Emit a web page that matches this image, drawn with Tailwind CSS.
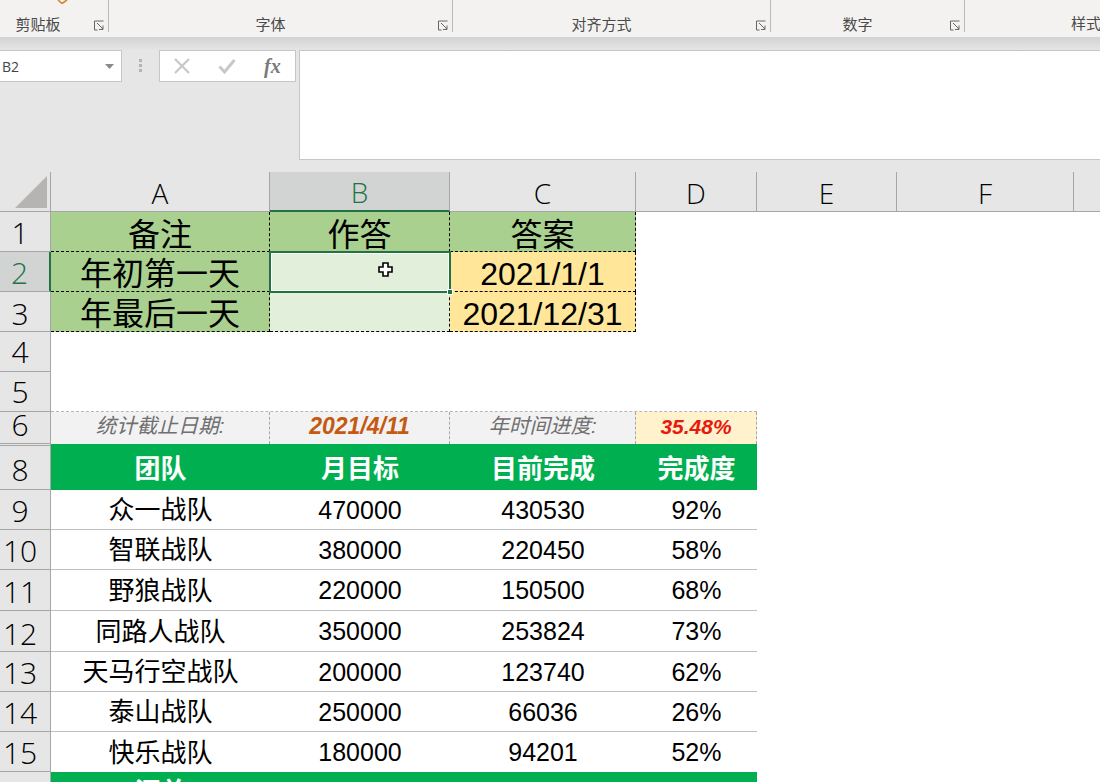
<!DOCTYPE html>
<html lang="zh-CN">
<head>
    <meta charset="UTF-8">
    <meta name="viewport" content="width=device-width, initial-scale=1.0">
    <title>Excel</title>
    <script src="https://cdn.jsdelivr.net/npm/@tailwindcss/browser@4"></script>
</head>
<body class="bg-white">
<div class="relative w-[1100px] h-[782px] overflow-hidden bg-white text-black font-['Liberation_Sans','Noto_Sans_CJK_SC',sans-serif]">

    <!-- Ribbon -->
    <div class="relative flex h-[37px] bg-[#f3f2f1] text-[15px] leading-[18px] text-[#4a4a4a] font-['Noto_Sans_CJK_SC',sans-serif]">
        <svg class="absolute left-[57px] top-0" width="12" height="4" viewBox="0 0 12 4"><path d="M1 0l4 3.5 5-3.5" fill="none" stroke="#d9822b" stroke-width="1.6"/></svg>
        <div class="h-[32px] w-[109px] shrink-0 flex items-end border-r border-[#b9b9b9]">
            <span class="flex-1 text-center pr-[18px] -mb-[1px]">剪贴板</span>
            <svg class="mr-[4px] mb-[1px]" width="10" height="11" viewBox="0 0 10 11"><path d="M9.5 1H.5v9h3M3 3l6 6M9 5.5V9.500H5" fill="none" stroke="#666" stroke-width="1"/></svg>
        </div>
        <div class="h-[32px] w-[344px] shrink-0 flex items-end border-r border-[#b9b9b9]">
            <span class="flex-1 text-center pr-[6px] -mb-[1px]">字体</span>
            <svg class="mr-[4px] mb-[1px]" width="10" height="11" viewBox="0 0 10 11"><path d="M9.5 1H.5v9h3M3 3l6 6M9 5.5V9.500H5" fill="none" stroke="#666" stroke-width="1"/></svg>
        </div>
        <div class="h-[32px] w-[318px] shrink-0 flex items-end border-r border-[#b9b9b9]">
            <span class="flex-1 text-center pr-[6px] -mb-[1px]">对齐方式</span>
            <svg class="mr-[4px] mb-[1px]" width="10" height="11" viewBox="0 0 10 11"><path d="M9.5 1H.5v9h3M3 3l6 6M9 5.5V9.500H5" fill="none" stroke="#666" stroke-width="1"/></svg>
        </div>
        <div class="h-[32px] w-[194px] shrink-0 flex items-end border-r border-[#b9b9b9]">
            <span class="flex-1 text-center pr-[6px] -mb-[1px]">数字</span>
            <svg class="mr-[4px] mb-[1px]" width="10" height="11" viewBox="0 0 10 11"><path d="M9.5 1H.5v9h3M3 3l6 6M9 5.5V9.500H5" fill="none" stroke="#666" stroke-width="1"/></svg>
        </div>
        <div class="h-[32px] flex items-end pl-[106px] -mb-[1px] whitespace-nowrap">样式</div>
    </div>

    <!-- Formula bar -->
    <div class="h-[135px] bg-[#e6e6e6] bg-linear-to-b from-[#d2d2d2] to-[#e6e6e6] to-[10%]">
        <div class="flex items-start pt-[13px]">
            <div class="flex items-center justify-between w-[122px] h-[32px] pl-[2px] pr-[7px] bg-white border-y border-r border-[#c6c6c6] text-[14px] text-[#444] font-['Open_Sans',sans-serif]">
                <span>B2</span>
                <svg width="9" height="5" viewBox="0 0 9 5"><path d="M0 0h9L4.500 5z" fill="#8a8a8a"/></svg>
            </div>
            <div class="flex flex-col gap-[2px] ml-[17px] mt-[9px] w-[3px]">
                <div class="h-[3px] bg-[#b4b4b4]"></div>
                <div class="h-[3px] bg-[#b4b4b4]"></div>
                <div class="h-[3px] bg-[#b4b4b4]"></div>
            </div>
            <div class="flex items-center w-[137px] h-[32px] ml-[17px] pl-[14px] bg-white border border-[#c6c6c6]">
                <svg width="16" height="16" viewBox="0 0 16 16"><path d="M1 1l14 14M15 1L1 15" stroke="#c8c8c8" stroke-width="2.200" fill="none"/></svg>
                <svg class="ml-[28px]" width="18" height="16" viewBox="0 0 18 16"><path d="M1.500 8.500l5 5.500L16.500 2" stroke="#c8c8c8" stroke-width="3" fill="none"/></svg>
                <span class="ml-[28px] text-[20px] font-bold italic text-[#7a7a7a] font-['Liberation_Serif',serif]">fx</span>
            </div>
            <div class="flex-1 h-[110px] ml-[3px] bg-white border-y border-l border-[#c6c6c6]"></div>
        </div>
    </div>

    <!-- Sheet -->
    <div class="grid grid-cols-[51px_219px_180px_186px_121px_140px_177px_1fr] grid-rows-[40px_40px_40px_40px_40px_40px_32px_2px_44px_40px_40px_41px_41px_40px_40px_40px_40px] bg-white">

        <!-- Column headers -->
        <div class="flex items-end justify-end bg-[#e6e6e6] border-r border-b border-[#a6a6a6] pr-[3px] pb-[3px]">
            <svg width="32" height="32" viewBox="0 0 32 32"><path d="M32 0v32H0z" fill="#b5b4b2"/></svg>
        </div>
        <div class="flex items-center justify-center pt-[2px] bg-[#e6e6e6] border-r border-b border-[#a6a6a6] text-[28px] font-[350] font-['Open_Sans',sans-serif]">A</div>
        <div class="flex items-center justify-center pt-[2px] bg-[#d2d4d3] border-r border-[#a6a6a6] border-b-2 border-b-[#217346] text-[28px] font-[350] text-[#217346] font-['Open_Sans',sans-serif]">B</div>
        <div class="flex items-center justify-center pt-[2px] bg-[#e6e6e6] border-r border-b border-[#a6a6a6] text-[28px] font-[350] font-['Open_Sans',sans-serif]">C</div>
        <div class="flex items-center justify-center pt-[2px] bg-[#e6e6e6] border-r border-b border-[#a6a6a6] text-[28px] font-[350] font-['Open_Sans',sans-serif]">D</div>
        <div class="flex items-center justify-center pt-[2px] bg-[#e6e6e6] border-r border-b border-[#a6a6a6] text-[28px] font-[350] font-['Open_Sans',sans-serif]">E</div>
        <div class="flex items-center justify-center pt-[2px] bg-[#e6e6e6] border-r border-b border-[#a6a6a6] text-[28px] font-[350] font-['Open_Sans',sans-serif]">F</div>
        <div class="bg-[#e6e6e6] border-b border-[#a6a6a6]"></div>

        <!-- Row 1 -->
        <div class="flex items-center justify-center pr-[10px] pt-[2px] bg-[#e6e6e6] border-r border-b border-[#a6a6a6] text-[30px] font-[350] font-['Open_Sans',sans-serif]">1</div>
        <div class="flex items-center justify-center pt-[6px] bg-[#a9d08e] border-r border-b border-dashed border-black text-[32px]">备注</div>
        <div class="flex items-center justify-center pt-[6px] bg-[#a9d08e] border-r border-b border-dashed border-black text-[32px]">作答</div>
        <div class="flex items-center justify-center pt-[6px] bg-[#a9d08e] border-r border-b border-dashed border-black text-[32px]">答案</div>
        <div class="col-span-4"></div>

        <!-- Row 2 -->
        <div class="flex items-center justify-center pr-[10px] pt-[2px] bg-[#d2d4d3] border-r-2 border-r-[#217346] border-b border-b-[#a6a6a6] text-[30px] font-[350] text-[#217346] font-['Open_Sans',sans-serif]">2</div>
        <div class="flex items-center justify-center pt-[4px] bg-[#a9d08e] border-r border-b border-dashed border-black text-[32px]">年初第一天</div>
        <div class="bg-[#e2efda] border-r border-b border-dashed border-black"></div>
        <div class="flex items-center justify-center pt-[4px] bg-[#ffe699] border-r border-b border-dashed border-black text-[32px]">2021/1/1</div>
        <div class="col-span-4"></div>

        <!-- Row 3 -->
        <div class="flex items-center justify-center pr-[10px] pt-[4px] bg-[#e6e6e6] border-r border-b border-[#a6a6a6] text-[30px] font-[350] font-['Open_Sans',sans-serif]">3</div>
        <div class="flex items-center justify-center pt-[4px] bg-[#a9d08e] border-r border-b border-dashed border-black text-[32px]">年最后一天</div>
        <div class="bg-[#e2efda] border-r border-b border-dashed border-black"></div>
        <div class="flex items-center justify-center pt-[4px] bg-[#ffe699] border-r border-b border-dashed border-black text-[32px]">2021/12/31</div>
        <div class="col-span-4"></div>

        <!-- Rows 4, 5 -->
        <div class="flex items-center justify-center pr-[10px] bg-[#e6e6e6] border-r border-b border-[#a6a6a6] text-[30px] font-[350] font-['Open_Sans',sans-serif]">4</div>
        <div class="col-span-7"></div>
        <div class="flex items-center justify-center pr-[10px] bg-[#e6e6e6] border-r border-b border-[#a6a6a6] text-[30px] leading-none font-[350] font-['Open_Sans',sans-serif]">5</div>
        <div class="col-span-7 border-b border-dashed border-[#b5b5b5] mr-[343px]"></div>

        <!-- Row 6 -->
        <div class="flex items-center justify-center pr-[10px] pb-[6px] bg-[#e6e6e6] border-r border-b border-[#a6a6a6] text-[30px] leading-none font-[350] font-['Open_Sans',sans-serif]">6</div>
        <div class="flex items-center justify-center pb-[3px] bg-[#f2f2f2] border-r border-dashed border-[#a6a6a6] text-[20.500px] italic text-[#6f6f6f]">统计截止日期:</div>
        <div class="flex items-center justify-center pb-[3px] bg-[#f2f2f2] border-r border-dashed border-[#a6a6a6] text-[23px] font-bold italic text-[#c65911]">2021/4/11</div>
        <div class="flex items-center justify-center pb-[3px] bg-[#f2f2f2] border-r border-dashed border-[#a6a6a6] text-[20.500px] italic text-[#6f6f6f]">年时间进度:</div>
        <div class="flex items-center justify-center pb-[3px] bg-[#fff2cc] border-r border-dashed border-[#a6a6a6] text-[21px] font-bold italic text-[#e8190c]">35.48%</div>
        <div class="col-span-3"></div>

        <!-- Row 7 (almost hidden) -->
        <div class="bg-[#e6e6e6] border-r border-b border-[#a6a6a6]"></div>
        <div class="col-span-4 bg-[#00b050]"></div>
        <div class="col-span-3"></div>

        <!-- Row 8 -->
        <div class="flex items-center justify-center pr-[10px] pt-[4px] bg-[#e6e6e6] border-r border-b border-[#a6a6a6] text-[30px] font-[350] font-['Open_Sans',sans-serif]">8</div>
        <div class="flex items-center justify-center pt-[2px] bg-[#00b050] text-[26px] font-bold text-white">团队</div>
        <div class="flex items-center justify-center pt-[2px] bg-[#00b050] text-[26px] font-bold text-white">月目标</div>
        <div class="flex items-center justify-center pt-[2px] bg-[#00b050] text-[26px] font-bold text-white">目前完成</div>
        <div class="flex items-center justify-center pt-[2px] bg-[#00b050] text-[26px] font-bold text-white">完成度</div>
        <div class="col-span-3"></div>

        <!-- Row 9 -->
        <div class="flex items-center justify-center pr-[10px] pt-[2px] bg-[#e6e6e6] border-r border-b border-[#a6a6a6] text-[30px] font-[350] font-['Open_Sans',sans-serif]">9</div>
        <div class="flex items-center justify-center pt-[2px] border-b border-[#bfbfbf] text-[26px]">众一战队</div>
        <div class="flex items-center justify-center pt-[2px] border-b border-[#bfbfbf] text-[25px]">470000</div>
        <div class="flex items-center justify-center pt-[2px] border-b border-[#bfbfbf] text-[25px]">430530</div>
        <div class="flex items-center justify-center pt-[2px] border-b border-[#bfbfbf] text-[25px]">92%</div>
        <div class="col-span-3"></div>

        <!-- Row 10 -->
        <div class="flex items-center justify-center pr-[10px] pt-[2px] bg-[#e6e6e6] border-r border-b border-[#a6a6a6] text-[30px] font-[350] font-['Open_Sans',sans-serif]">10</div>
        <div class="flex items-center justify-center pt-[2px] border-b border-[#bfbfbf] text-[26px]">智联战队</div>
        <div class="flex items-center justify-center pt-[2px] border-b border-[#bfbfbf] text-[25px]">380000</div>
        <div class="flex items-center justify-center pt-[2px] border-b border-[#bfbfbf] text-[25px]">220450</div>
        <div class="flex items-center justify-center pt-[2px] border-b border-[#bfbfbf] text-[25px]">58%</div>
        <div class="col-span-3"></div>

        <!-- Row 11 -->
        <div class="flex items-center justify-center pr-[10px] pt-[2px] bg-[#e6e6e6] border-r border-b border-[#a6a6a6] text-[30px] font-[350] font-['Open_Sans',sans-serif]">11</div>
        <div class="flex items-center justify-center pt-[2px] border-b border-[#bfbfbf] text-[26px]">野狼战队</div>
        <div class="flex items-center justify-center pt-[2px] border-b border-[#bfbfbf] text-[25px]">220000</div>
        <div class="flex items-center justify-center pt-[2px] border-b border-[#bfbfbf] text-[25px]">150500</div>
        <div class="flex items-center justify-center pt-[2px] border-b border-[#bfbfbf] text-[25px]">68%</div>
        <div class="col-span-3"></div>

        <!-- Row 12 -->
        <div class="flex items-center justify-center pr-[10px] pt-[4px] bg-[#e6e6e6] border-r border-b border-[#a6a6a6] text-[30px] font-[350] font-['Open_Sans',sans-serif]">12</div>
        <div class="flex items-center justify-center pt-[2px] border-b border-[#bfbfbf] text-[26px]">同路人战队</div>
        <div class="flex items-center justify-center pt-[2px] border-b border-[#bfbfbf] text-[25px]">350000</div>
        <div class="flex items-center justify-center pt-[2px] border-b border-[#bfbfbf] text-[25px]">253824</div>
        <div class="flex items-center justify-center pt-[2px] border-b border-[#bfbfbf] text-[25px]">73%</div>
        <div class="col-span-3"></div>

        <!-- Row 13 -->
        <div class="flex items-center justify-center pr-[10px] pt-[2px] bg-[#e6e6e6] border-r border-b border-[#a6a6a6] text-[30px] font-[350] font-['Open_Sans',sans-serif]">13</div>
        <div class="flex items-center justify-center pt-[2px] border-b border-[#bfbfbf] text-[26px]">天马行空战队</div>
        <div class="flex items-center justify-center pt-[2px] border-b border-[#bfbfbf] text-[25px]">200000</div>
        <div class="flex items-center justify-center pt-[2px] border-b border-[#bfbfbf] text-[25px]">123740</div>
        <div class="flex items-center justify-center pt-[2px] border-b border-[#bfbfbf] text-[25px]">62%</div>
        <div class="col-span-3"></div>

        <!-- Row 14 -->
        <div class="flex items-center justify-center pr-[10px] pt-[2px] bg-[#e6e6e6] border-r border-b border-[#a6a6a6] text-[30px] font-[350] font-['Open_Sans',sans-serif]">14</div>
        <div class="flex items-center justify-center pt-[2px] border-b border-[#bfbfbf] text-[26px]">泰山战队</div>
        <div class="flex items-center justify-center pt-[2px] border-b border-[#bfbfbf] text-[25px]">250000</div>
        <div class="flex items-center justify-center pt-[2px] border-b border-[#bfbfbf] text-[25px]">66036</div>
        <div class="flex items-center justify-center pt-[2px] border-b border-[#bfbfbf] text-[25px]">26%</div>
        <div class="col-span-3"></div>

        <!-- Row 15 -->
        <div class="flex items-center justify-center pr-[10px] pt-[2px] bg-[#e6e6e6] border-r border-b border-[#a6a6a6] text-[30px] font-[350] font-['Open_Sans',sans-serif]">15</div>
        <div class="flex items-center justify-center pt-[2px] text-[26px]">快乐战队</div>
        <div class="flex items-center justify-center pt-[2px] text-[25px]">180000</div>
        <div class="flex items-center justify-center pt-[2px] text-[25px]">94201</div>
        <div class="flex items-center justify-center pt-[2px] text-[25px]">52%</div>
        <div class="col-span-3"></div>

        <!-- Row 16, cut off by the window -->
        <div class="bg-[#e6e6e6] border-r border-[#a6a6a6]"></div>
        <div class="flex items-center justify-center bg-[#00b050] text-[26px] font-bold text-white">汇总</div>
        <div class="col-span-3 bg-[#00b050]"></div>
        <div class="col-span-3"></div>
    </div>

    <!-- Selection box on B2 -->
    <div class="absolute left-[269px] top-[251px] w-[182px] h-[42px] border-2 border-[#217346] shadow-[inset_0_0_0_1px_white]"></div>
    <div class="absolute left-[447px] top-[289px] w-[6px] h-[6px] bg-[#217346] border border-white"></div>
    <svg class="absolute left-[378px] top-[262px]" width="15" height="15" viewBox="0 0 15 15"><path d="M5 1h5v4h4v5h-4v4H5v-4H1V5h4z" fill="white" stroke="black" stroke-width="1.600"/></svg>
</div>
</body>
</html>
